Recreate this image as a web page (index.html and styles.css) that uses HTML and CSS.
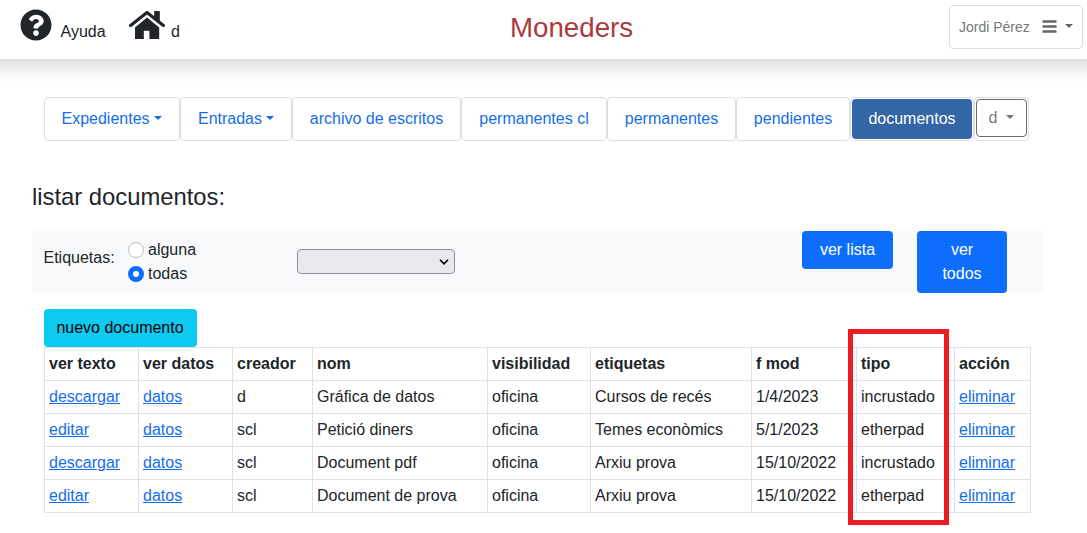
FILE: index.html
```
<!DOCTYPE html>
<html lang="es">
<head>
<meta charset="utf-8">
<title>Moneders</title>
<link rel="stylesheet" href="styles.css">
</head>
<body>
<header class="topbar">
  <a class="toplink help"><svg class="icon-help" viewBox="0 0 512 512"><path d="M504 256c0 136.997-111.043 248-248 248S8 392.997 8 256C8 119.083 119.043 8 256 8s248 111.083 248 248zM262.655 90c-54.497 0-89.255 22.957-116.549 63.758-3.536 5.286-2.353 12.415 2.715 16.258l34.699 26.31c5.205 3.947 12.621 3.008 16.665-2.122 17.864-22.658 30.113-35.797 57.303-35.797 20.429 0 45.698 13.148 45.698 32.958 0 14.976-12.363 22.667-32.534 33.976C247.128 238.528 216 254.941 216 296v4c0 6.627 5.373 12 12 12h56c6.627 0 12-5.373 12-12v-1.333c0-28.462 83.186-29.647 83.186-106.667 0-58.002-60.165-102-116.531-102zM256 338c-25.365 0-46 20.635-46 46 0 25.364 20.635 46 46 46s46-20.636 46-46c0-25.364-20.635-46-46-46z"/></svg><span>Ayuda</span></a>
  <a class="toplink home"><svg class="icon-home" viewBox="0 0 36 32"><path d="M6 18.6L18 8.6L30.2 18.6V30H20.4V21.8H14.8V30H6zM25.2 2H30.8V13L25.2 8.6z"/><path class="roof" d="M1.6 16.4L18 3.4L34.4 16.4"/></svg><span>d</span></a>
  <h1 class="brand">Moneders</h1>
  <button class="user" type="button"><span>Jordi Pérez</span><svg class="icon-bars" viewBox="0 0 15 13"><path d="M.5 1.5h14M.5 6.5h14M.5 11.5h14"/></svg><i class="caret"></i></button>
</header>

<main class="page">
  <nav class="tabs">
    <a class="tab expedientes">Expedientes<i class="caret"></i></a>
    <a class="tab entradas">Entradas<i class="caret"></i></a>
    <a class="tab archivo">archivo de escritos</a>
    <a class="tab permanentes-cl">permanentes cl</a>
    <a class="tab permanentes">permanentes</a>
    <a class="tab pendientes">pendientes</a>
    <a class="tab active"><span>documentos</span></a>
    <div class="tab more"><button type="button">d<i class="caret"></i></button></div>
  </nav>

  <h2 class="heading">listar documentos:</h2>

  <form class="filter">
    <span class="filter-label">Etiquetas:</span>
    <div class="radios">
      <label><input type="radio" name="modo">alguna</label>
      <label><input type="radio" name="modo" checked>todas</label>
    </div>
    <div class="select"><svg viewBox="0 0 10 6"><path d="M1 .8l4 4 4-4"/></svg></div>
    <button class="btn list" type="button">ver lista</button>
    <button class="btn all" type="button">ver todos</button>
  </form>

  <button class="btn new" type="button">nuevo documento</button>

  <div class="table-wrap">
    <table class="docs">
      <colgroup><col class="c1"><col class="c2"><col class="c3"><col class="c4"><col class="c5"><col class="c6"><col class="c7"><col class="c8"><col class="c9"></colgroup>
      <tr><th>ver texto</th><th>ver datos</th><th>creador</th><th>nom</th><th>visibilidad</th><th>etiquetas</th><th>f mod</th><th>tipo</th><th>acción</th></tr>
      <tr><td><a>descargar</a></td><td><a>datos</a></td><td>d</td><td>Gráfica de datos</td><td>oficina</td><td>Cursos de recés</td><td>1/4/2023</td><td>incrustado</td><td><a>eliminar</a></td></tr>
      <tr><td><a>editar</a></td><td><a>datos</a></td><td>scl</td><td>Petició diners</td><td>oficina</td><td>Temes econòmics</td><td>5/1/2023</td><td>etherpad</td><td><a>eliminar</a></td></tr>
      <tr><td><a>descargar</a></td><td><a>datos</a></td><td>scl</td><td>Document pdf</td><td>oficina</td><td>Arxiu prova</td><td>15/10/2022</td><td>incrustado</td><td><a>eliminar</a></td></tr>
      <tr><td><a>editar</a></td><td><a>datos</a></td><td>scl</td><td>Document de prova</td><td>oficina</td><td>Arxiu prova</td><td>15/10/2022</td><td>etherpad</td><td><a>eliminar</a></td></tr>
    </table>
    <div class="highlight"></div>
  </div>
</main>
</body>
</html>
```

FILE: styles.css
```
* { box-sizing: border-box; }
body {
  margin: 0;
  height: 533px;
  overflow: hidden;
  background: #fff;
  color: #212529;
  font: 16px/24px "Liberation Sans", Arial, sans-serif;
}
button { font: inherit; cursor: pointer; }
.caret {
  display: inline-block;
  margin-left: 4px;
  vertical-align: 4px;
  border: 4px solid transparent;
  border-top-color: currentColor;
  border-bottom: 0;
}

.topbar {
  display: grid;
  grid-template-columns: 109px 381px 1fr 134px;
  height: 59px;
  margin: 0 -24px;
  padding: 0 28px 0 44px;
  box-shadow: 0 8px 16px rgba(0, 0, 0, .15);
}
.toplink { display: flex; align-items: flex-start; }
.toplink span { margin-top: 20px; }
.toplink svg { fill: #212529; }
.icon-help { width: 32px; height: 32px; margin: 9px 8.5px 0 0; }
.icon-home { width: 36px; height: 32px; margin: 9px 6px 0 0; }
.icon-home .roof {
  fill: none;
  stroke: #212529;
  stroke-width: 3.2;
  stroke-linecap: round;
  stroke-linejoin: round;
}
.brand {
  margin: 11px 0 0;
  font-size: 27.7px;
  line-height: 34px;
  font-weight: 400;
  color: #a83c3c;
}
.user {
  display: flex;
  align-items: center;
  height: 44px;
  margin-top: 5px;
  padding: 0 0 0 9px;
  border: 1px solid #dcdcdc;
  border-radius: 4px;
  background: #fff;
  color: #777;
  font-size: 14px;
}
.icon-bars {
  width: 15px;
  height: 13px;
  margin: 0 8px 2px 12px;
  fill: none;
  stroke: #666;
  stroke-width: 2.3;
}
.user .caret { margin: 0 0 2px; border-top-color: #666; }

.page { padding: 38px 44px 0 32px; }
.tabs { display: flex; height: 44px; margin-left: 12px; }
.tab {
  flex: none;
  border: 1px solid #dcdfe2;
  border-radius: 4px;
  padding: 9px 0 0;
  text-align: center;
  color: #156ee8;
  white-space: nowrap;
}
.expedientes { width: 136px; padding-right: 1px; }
.entradas { width: 112px; }
.archivo { width: 169px; }
.permanentes-cl { width: 146px; }
.permanentes { width: 129px; }
.pendientes { width: 114px; }
.active { width: 124px; padding: 1px; }
.active span {
  display: block;
  height: 40px;
  padding-top: 8px;
  border-radius: 4px;
  background: #3465a4;
  color: #fff;
}
.more { width: 55px; padding: 1px; }
.more button {
  display: block;
  width: 51px;
  height: 38px;
  padding: 0;
  border: 1px solid #6c6c6c;
  border-radius: 4px;
  background: #fff;
  color: #777;
}
.more .caret { margin-left: 9px; }

.heading {
  margin: 41px 0 20px;
  font-size: 23.8px;
  line-height: 29px;
  font-weight: 400;
}

.filter {
  display: flex;
  align-items: flex-start;
  height: 62px;
  background: #f8f9fa;
}
.filter-label { width: 84px; padding: 15px 0 0 11.5px; }
.radios { width: 169px; padding: 7px 0 0 12px; }
.radios label { display: flex; align-items: center; height: 24px; }
.radios input {
  appearance: none;
  width: 16px;
  height: 16px;
  margin: 0 4px 0 0;
  border: 1px solid #bfbfbf;
  border-radius: 50%;
  background: #fff;
}
.radios input:checked { border: 5px solid #0d6efd; }
.select {
  display: flex;
  align-items: center;
  justify-content: flex-end;
  width: 158px;
  height: 25px;
  margin: 18px 347px 0 12px;
  padding-right: 5px;
  border: 1px solid #8f8f9d;
  border-radius: 4px;
  background: #e9e9ed;
}
.select svg { width: 10px; height: 6px; fill: none; stroke: #000; stroke-width: 1.6; }
.btn {
  padding: 7px 12px;
  border: 0;
  border-radius: 4px;
  background: #0d6efd;
  color: #fff;
}
.list { width: 91px; height: 38px; margin-right: 24px; }
.all { width: 90px; height: 62px; padding: 7px 20px; }
.new {
  display: block;
  width: 153px;
  height: 38px;
  margin: 16px 0 0 12px;
  padding: 7px 1px 7px 0;
  background: #0dcaf0;
  color: #000;
}

.table-wrap { position: relative; width: 987px; margin-left: 12px; }
.docs { width: 987px; table-layout: fixed; border-collapse: collapse; }
.docs th, .docs td {
  height: 33px;
  padding: 4px;
  border: 1px solid #dee2e6;
  text-align: left;
  white-space: nowrap;
}
.docs a { color: #156ee8; text-decoration: underline; }
.c1 { width: 94px; }
.c2 { width: 94px; }
.c3 { width: 80px; }
.c4 { width: 175px; }
.c5 { width: 103px; }
.c6 { width: 161px; }
.c7 { width: 105px; }
.c8 { width: 98px; }
.c9 { width: 76px; }
.highlight {
  position: absolute;
  left: 804px;
  top: -18px;
  width: 101px;
  height: 196px;
  border: 5px solid #ed1c24;
}
```
